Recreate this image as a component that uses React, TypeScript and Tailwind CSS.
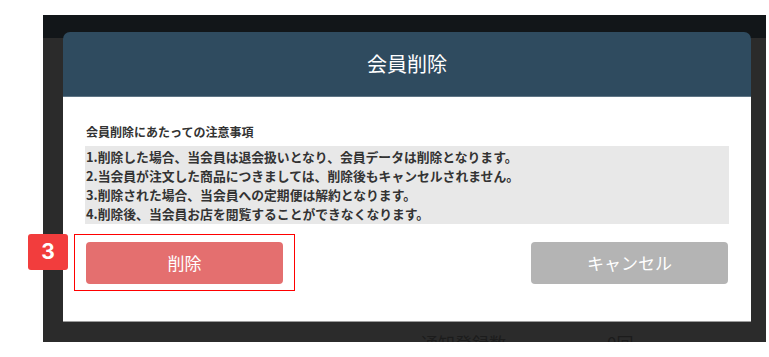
import React from "react";

const jp = { fontFamily: '"Noto Sans CJK JP", "Noto Sans", sans-serif' };

export default function App() {
  const notes = [
    "1.削除した場合、当会員は退会扱いとなり、会員データは削除となります。",
    "2.当会員が注文した商品につきましては、削除後もキャンセルされません。",
    "3.削除された場合、当会員への定期便は解約となります。",
    "4.削除後、当会員お店を閲覧することができなくなります。",
  ];
  return (
    <div className="relative w-[769px] h-[357px] bg-white overflow-hidden" style={jp}>
      <div className="pl-[43px] pt-[15px]">
        <div className="relative w-[723px] h-[327px] bg-[#2b2b2b] overflow-hidden">
          <div className="h-[23px] bg-[#121619]" />
          <div className="flex pt-[293px] pl-[378px] text-[17px] leading-[24px] text-[#1c1c1c]">
            <span className="w-[186px]">通知登録数</span>
            <span>0回</span>
          </div>

          {/* modal */}
          <div className="absolute left-[20px] top-[17px] w-[688px] flex flex-col">
            <div className="h-[65px] bg-[#2f4b5f] rounded-t-[7px] flex items-center justify-center border-b border-[#5f7585]">
              <span className="text-white text-[20px] leading-none">会員削除</span>
            </div>
            <div className="h-[225px] bg-white border-b border-[#9c9c9c] flex flex-col px-[22px] pt-[26px]">
              <div className="text-[12px] leading-[18px] font-bold text-[#333] pl-[1px]">
                会員削除にあたっての注意事項
              </div>
              <div className="mt-[5px] bg-[#e8e8e8] py-[1px] px-[1px]">
                {notes.map((n) => (
                  <div key={n} className="text-[12.8px] leading-[19px] font-bold text-[#333] whitespace-nowrap">
                    {n}
                  </div>
                ))}
              </div>
              <div className="mt-[18px] flex justify-between px-[1px]">
                <button className="w-[197px] h-[42px] rounded-[4px] bg-[#e46f6f] text-white text-[17px] flex items-center justify-center">
                  削除
                </button>
                <button className="w-[197px] h-[42px] rounded-[4px] bg-[#b4b4b4] text-white text-[17px] flex items-center justify-center">
                  キャンセル
                </button>
              </div>
            </div>
          </div>
        </div>
      </div>

      {/* annotations */}
      <div className="absolute left-[74px] top-[234px] w-[221px] h-[57px] border border-[#ff0000]" />
      <div
        className="absolute left-[28px] top-[234px] w-[40px] h-[36px] rounded-[3px] bg-[#f23d3d] text-white text-[21px] font-bold flex items-center justify-center"
        style={{ fontFamily: '"Inter", "Noto Sans", sans-serif' }}
      >
        3
      </div>
    </div>
  );
}
